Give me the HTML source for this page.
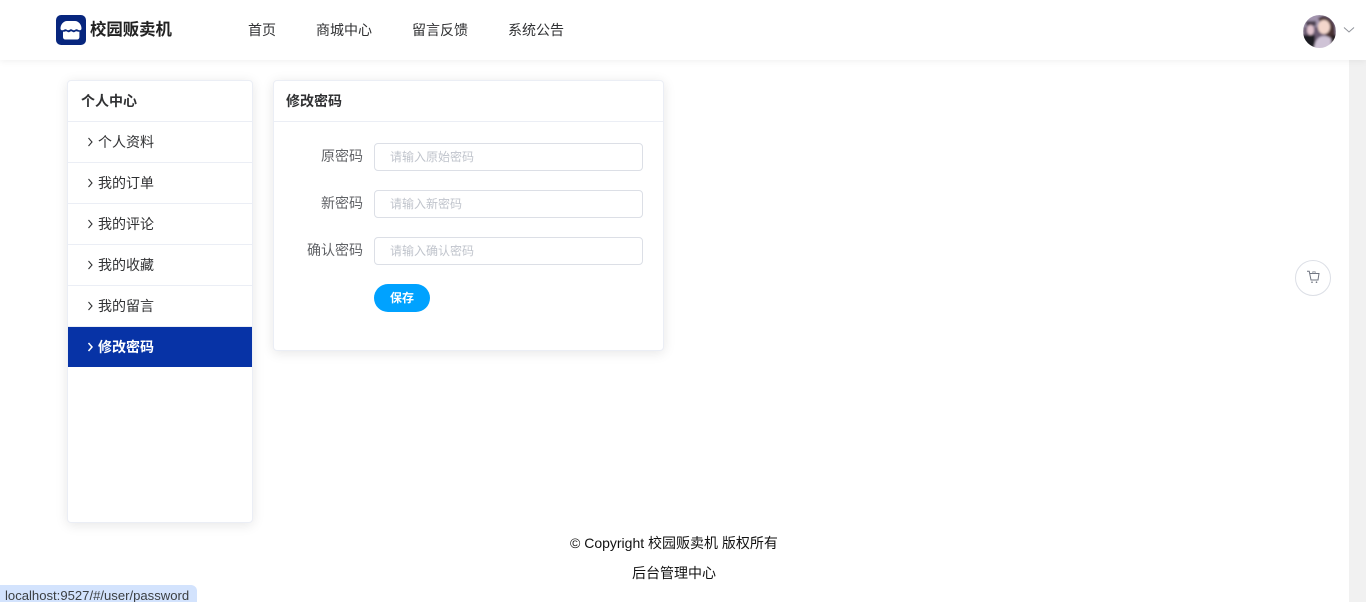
<!DOCTYPE html>
<html lang="zh-CN">
<head>
<meta charset="utf-8">
<title>校园贩卖机</title>
<style>
*{box-sizing:border-box}
html,body{margin:0;padding:0;width:1366px;height:602px;overflow:hidden;background:#fff;font-family:"Liberation Sans","Noto Sans CJK SC",sans-serif;color:#303133}
.abs{position:absolute;white-space:nowrap}
#sb{position:absolute;left:1349px;top:0;width:17px;height:602px;background:#f1f1f1}
#hd{position:absolute;left:0;top:0;width:1366px;height:60px;background:#fff;box-shadow:0 2px 6px rgba(0,0,0,.05)}
.nav{top:20px;font-size:14px;line-height:20px;color:#303133}
.card{position:absolute;background:#fff;border:1px solid #ebeef5;border-radius:4px;box-shadow:0 2px 12px rgba(0,0,0,.1)}
.side-t{position:absolute;left:0;top:0;width:184px;height:41px;border-bottom:1px solid #ebeef5;padding-left:13px;font-size:14px;font-weight:700;line-height:41px;color:#303133}
.it{position:absolute;left:0;width:184px;height:41px;border-bottom:1px solid #ebeef5;font-size:14px;line-height:41px;color:#303133;padding-left:30px}
.it svg{position:absolute;left:19px;top:15px}
.it.on{background:#0733a6;color:#fff;font-weight:700;height:40px;border-bottom:0}
.lb{font-size:14px;line-height:20px;color:#606266;text-align:right;width:80px;left:283px}
.ip{position:absolute;left:374px;width:269px;height:28px;border:1px solid #dcdfe6;border-radius:4px;background:#fff;font-size:12px;line-height:27px;padding-left:15px;color:#c0c4cc}
#btn{position:absolute;left:374px;top:284px;width:56px;height:28px;border-radius:14px;background:#00a2ff;color:#fff;font-size:12px;font-weight:700;line-height:28px;text-align:center}
#status{position:absolute;left:0;top:585px;width:197px;height:17px;background:#d3e3fd;border-top-right-radius:6px;font-size:13.1px;line-height:22px;padding-left:5px;color:#3c4043;overflow:hidden;white-space:nowrap}
</style>
</head>
<body>
<div id="sb"></div>
<div id="hd"></div>

<svg class="abs" style="left:56px;top:15px" width="30" height="30" viewBox="0 0 30 30">
<rect width="30" height="30" rx="5" fill="#07267e"/>
<path d="M11 6h8c3.500 0 6.500 3.500 6.500 7.500 0 1.300-1 1.800-2 1.800-1.200 0-2-1-3-1s-1.500 1-2.700 1-1.800-1-2.800-1-1.600 1-2.800 1-1.700-1-2.700-1-1.800 1-3 1-2-.5-2-1.800C4.500 9.500 7.500 6 11 6z" fill="#fff"/>
<path d="M7 16.600c1.200.5 2.200-.4 3-.4 1 0 1.700 1 2.700 1s1.500-1 2.500-1 1.500 1 2.500 1 1.700-1 2.700-1c.8 0 1.500.8 3 .4V22c0 1.500-1 2.500-2.500 2.500H9.500C8 24.500 7 23.500 7 22z" fill="#fff"/>
</svg>
<div class="abs" style="left:90px;top:18px;font-size:16.400px;font-weight:700;line-height:24px;color:#222">校园贩卖机</div>

<div class="abs nav" style="left:248px">首页</div>
<div class="abs nav" style="left:316px">商城中心</div>
<div class="abs nav" style="left:412px">留言反馈</div>
<div class="abs nav" style="left:508px">系统公告</div>

<svg class="abs" style="left:1303px;top:15px" width="33" height="33" viewBox="0 0 33 33">
<defs>
<clipPath id="av"><circle cx="16.500" cy="16.500" r="16.500"/></clipPath>
<filter id="bl" x="-10%" y="-10%" width="120%" height="120%"><feGaussianBlur stdDeviation="1"/></filter>
</defs>
<g clip-path="url(#av)"><g filter="url(#bl)">
<rect width="33" height="33" fill="#6b5a72"/>
<rect x="-2" y="-2" width="20" height="14" fill="#a294ae"/>
<rect x="3" y="6" width="10" height="5" fill="#4c3f50"/>
<rect x="-2" y="20" width="14" height="15" fill="#1f1a22"/>
<ellipse cx="7.500" cy="15" rx="3.500" ry="5" fill="#e3c4cf"/>
<path d="M15 3c7-3 15 1 16 10l1 10-6 3-4-8z" fill="#4a3331"/>
<ellipse cx="21" cy="12" rx="6" ry="7" fill="#f3d6cb"/>
<path d="M11 35c0-8 4-14 10-14s11 5 11 14z" fill="#cfc3d6"/>
<rect x="28" y="20" width="6" height="14" fill="#2b2228"/>
</g></g>
</svg>
<svg class="abs" style="left:1343px;top:26px" width="12" height="8" viewBox="0 0 12 8"><path d="M1 1.500l5 4.500 5-4.500" fill="none" stroke="#8f9299" stroke-width="1"/></svg>

<div class="card" style="left:67px;top:80px;width:186px;height:443px">
  <div class="side-t">个人中心</div>
  <div class="it" style="top:41px"><svg width="7" height="10" viewBox="0 0 7 10"><path d="M1.500 1l3.500 4-3.500 4" fill="none" stroke="#303133" stroke-width="1.100"/></svg>个人资料</div>
  <div class="it" style="top:82px"><svg width="7" height="10" viewBox="0 0 7 10"><path d="M1.500 1l3.500 4-3.500 4" fill="none" stroke="#303133" stroke-width="1.100"/></svg>我的订单</div>
  <div class="it" style="top:123px"><svg width="7" height="10" viewBox="0 0 7 10"><path d="M1.500 1l3.500 4-3.500 4" fill="none" stroke="#303133" stroke-width="1.100"/></svg>我的评论</div>
  <div class="it" style="top:164px"><svg width="7" height="10" viewBox="0 0 7 10"><path d="M1.500 1l3.500 4-3.500 4" fill="none" stroke="#303133" stroke-width="1.100"/></svg>我的收藏</div>
  <div class="it" style="top:205px"><svg width="7" height="10" viewBox="0 0 7 10"><path d="M1.500 1l3.500 4-3.500 4" fill="none" stroke="#303133" stroke-width="1.100"/></svg>我的留言</div>
  <div class="it on" style="top:246px"><svg width="7" height="10" viewBox="0 0 7 10"><path d="M1.500 1l3.500 4-3.500 4" fill="none" stroke="#fff" stroke-width="1.500"/></svg>修改密码</div>
</div>

<div class="card" style="left:273px;top:80px;width:391px;height:271px">
  <div class="side-t" style="width:389px;padding-left:12px">修改密码</div>
</div>

<div class="abs lb" style="top:146px">原密码</div>
<div class="ip" style="top:143px">请输入原始密码</div>
<div class="abs lb" style="top:193px">新密码</div>
<div class="ip" style="top:190px">请输入新密码</div>
<div class="abs lb" style="top:240px">确认密码</div>
<div class="ip" style="top:237px">请输入确认密码</div>
<div id="btn">保存</div>

<div class="abs" style="left:1295px;top:260px;width:36px;height:36px;border:1px solid #dcdfe6;border-radius:50%;background:#fff"></div>
<svg class="abs" style="left:1306px;top:270px" width="14" height="14" viewBox="0 0 14 14"><path d="M1 1.200h2.200L5 10h7l1-6.500H3.800" fill="none" stroke="#6f7480" stroke-width="1"/><path d="M6.800 3.500V1.800h2.400v1.700" fill="none" stroke="#8a8f99" stroke-width=".8"/><circle cx="6" cy="12.200" r=".8" fill="#6f7480"/><circle cx="10.500" cy="12.200" r=".8" fill="#6f7480"/></svg>

<div class="abs" style="left:570px;top:533px;font-size:14px;line-height:20px;color:#111">© Copyright 校园贩卖机 版权所有</div>
<div class="abs" style="left:632px;top:563px;font-size:14px;line-height:20px;color:#111">后台管理中心</div>

<div id="status">localhost:9527/#/user/password</div>
</body>
</html>
